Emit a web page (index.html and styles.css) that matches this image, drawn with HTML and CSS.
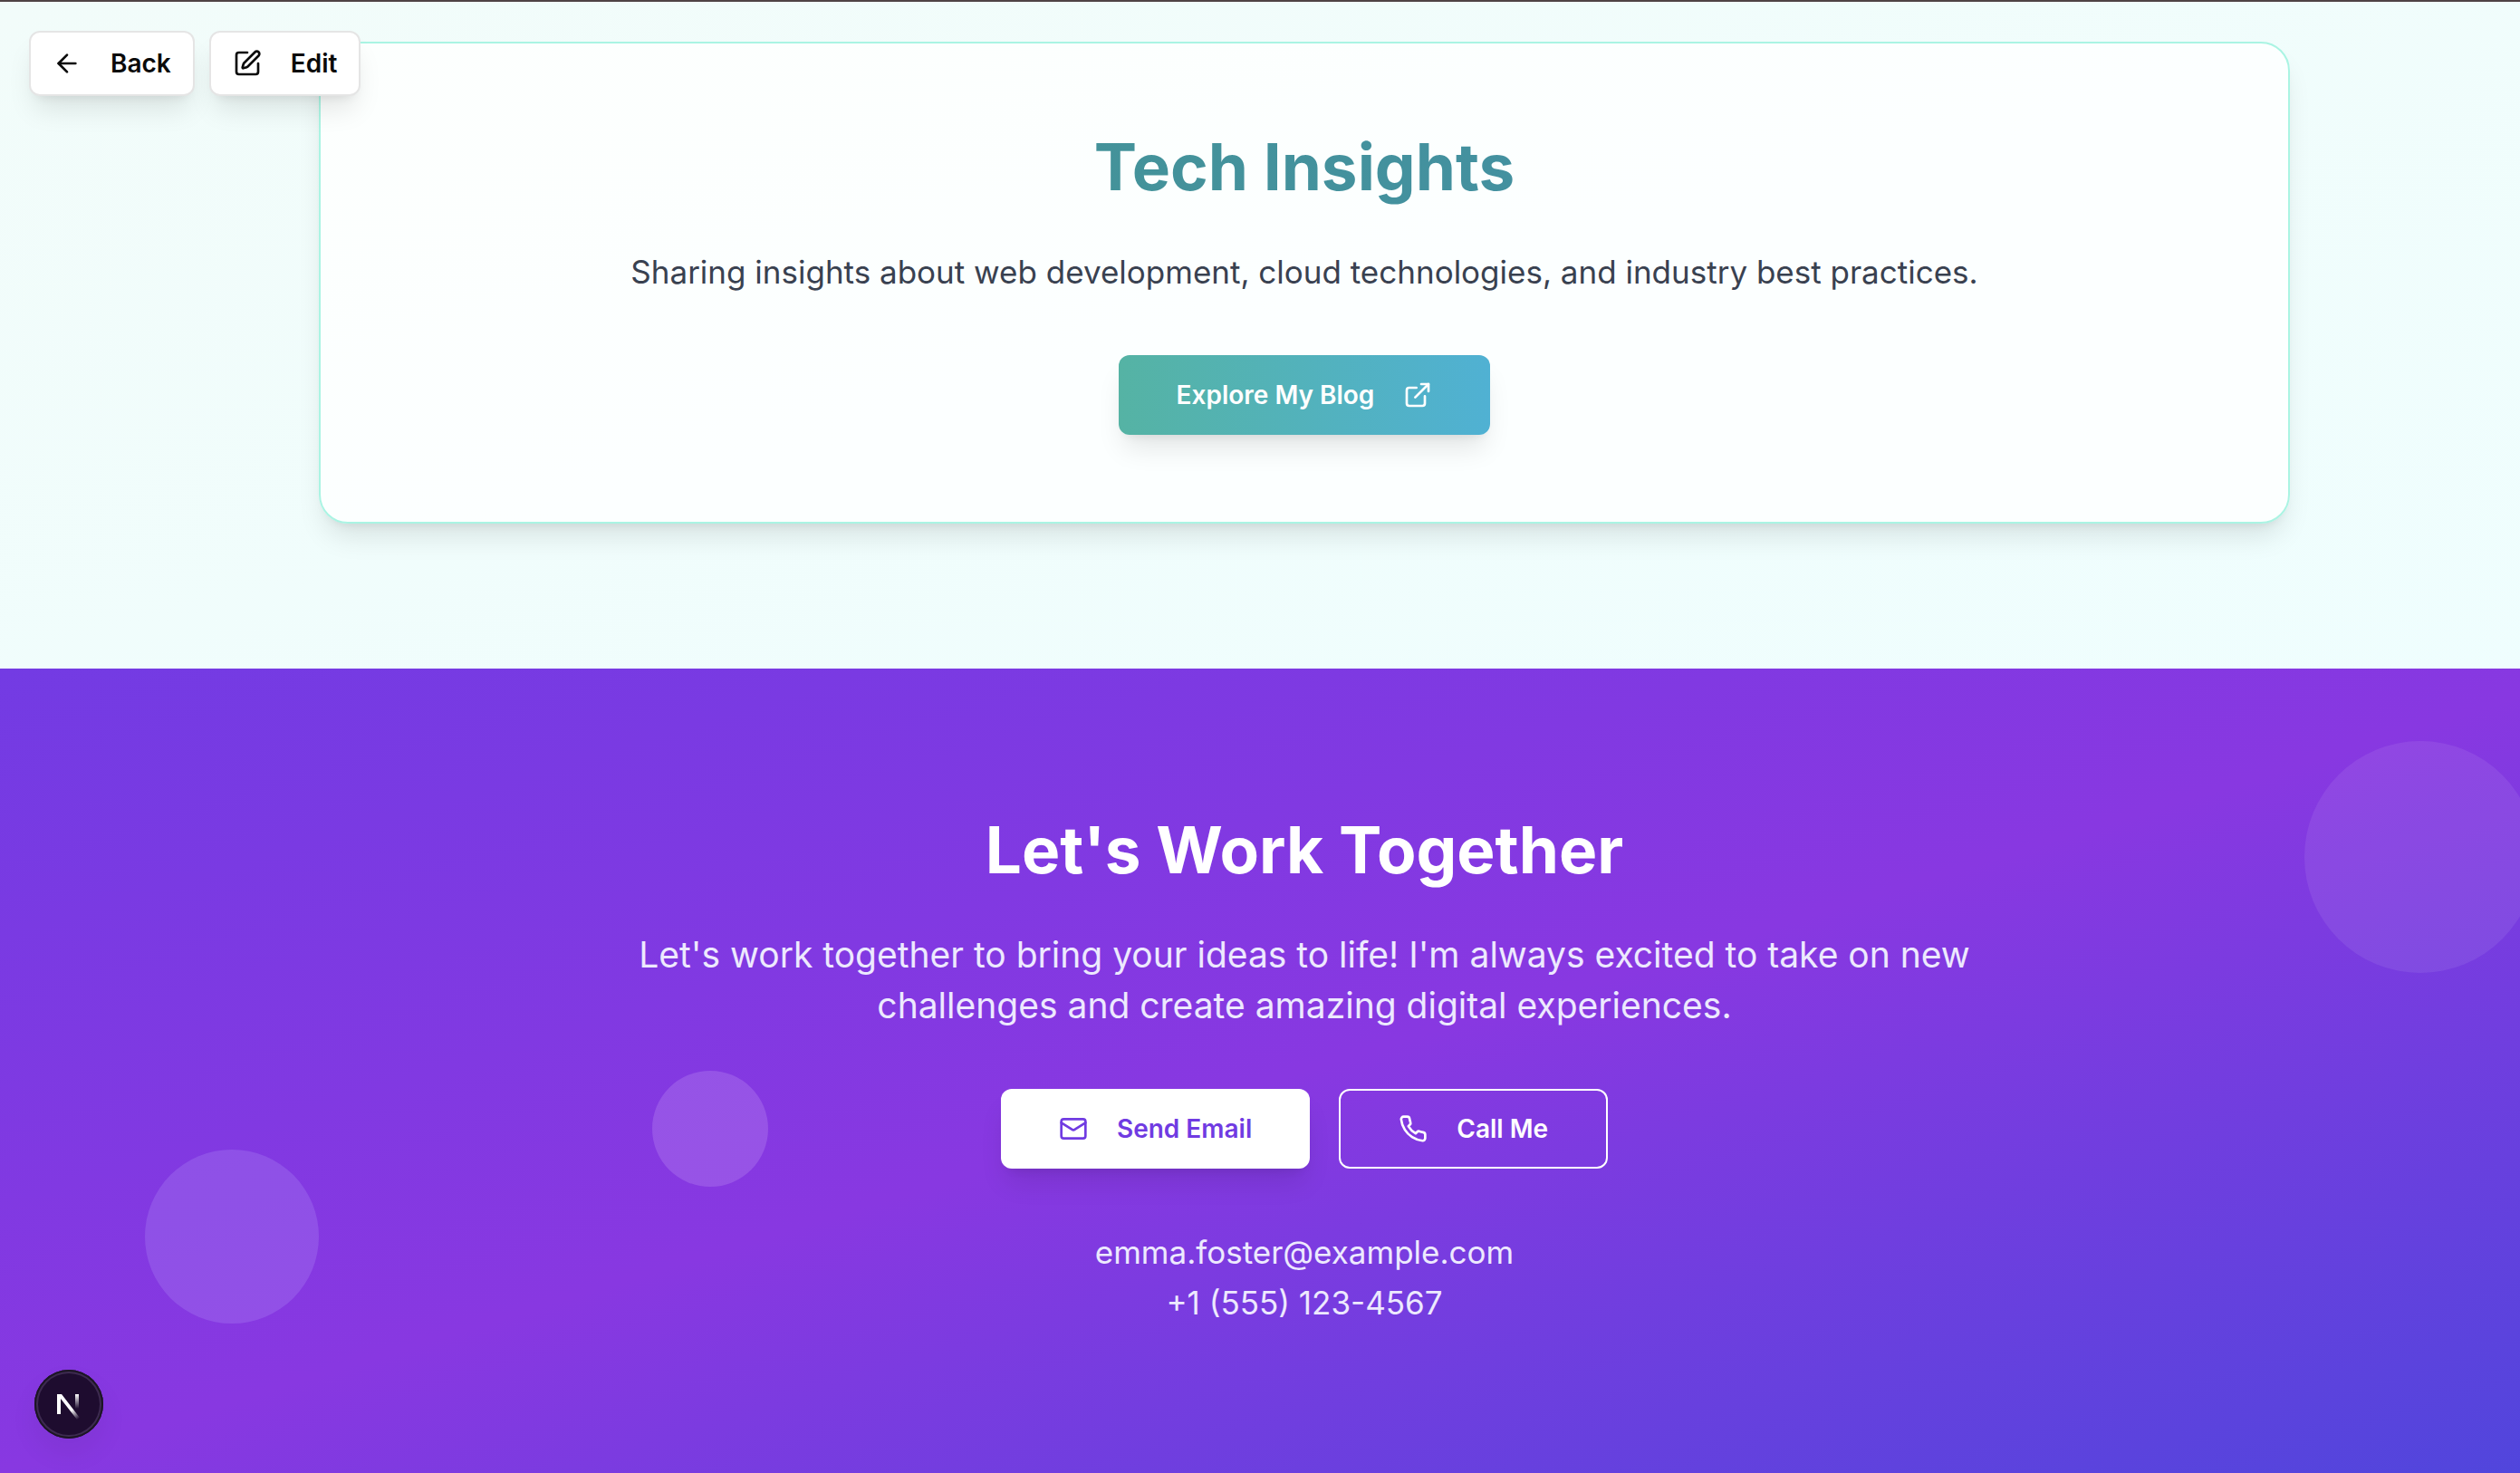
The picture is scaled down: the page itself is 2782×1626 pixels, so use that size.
FILE: index.html
```html
<!DOCTYPE html>
<html lang="en">
<head>
<meta charset="utf-8">
<meta name="viewport" content="width=device-width, initial-scale=1">
<title>Emma Foster – Portfolio</title>
<link rel="stylesheet" href="styles.css">
</head>
<body>
<nav class="toolbar" aria-label="Page actions">
  <button class="tool" type="button">
    <svg class="icon" viewBox="0 0 24 24" aria-hidden="true"><path d="m12 19-7-7 7-7"/><path d="M19 12H5"/></svg>
    <span>Back</span>
  </button>
  <button class="tool" type="button">
    <svg class="icon" viewBox="0 0 24 24" aria-hidden="true"><path d="M12 3H5a2 2 0 0 0-2 2v14a2 2 0 0 0 2 2h14a2 2 0 0 0 2-2v-7"/><path d="M18.375 2.625a1 1 0 0 1 3 3l-9.013 9.014a2 2 0 0 1-.853.505l-2.873.84a.5.5 0 0 1-.62-.62l.84-2.873a2 2 0 0 1 .506-.852z"/></svg>
    <span>Edit</span>
  </button>
</nav>

<main class="page">
  <section class="blog">
    <div class="card">
      <h2 class="heading heading-teal">Tech Insights</h2>
      <p class="summary">Sharing insights about web development, cloud technologies, and industry best practices.</p>
      <a class="btn btn-blog" href="#blog">
        <span>Explore My Blog</span>
        <svg class="icon" viewBox="0 0 24 24" aria-hidden="true"><path d="M15 3h6v6"/><path d="M10 14 21 3"/><path d="M18 13v6a2 2 0 0 1-2 2H5a2 2 0 0 1-2-2V8a2 2 0 0 1 2-2h6"/></svg>
      </a>
    </div>
  </section>

  <section class="contact">
    <span class="bubble bubble-right"></span>
    <span class="bubble bubble-left"></span>
    <span class="bubble bubble-small"></span>
    <div class="contact-body">
      <h2 class="heading">Let's Work Together</h2>
      <p class="pitch">Let's work together to bring your ideas to life! I'm always excited to take on new challenges and create amazing digital experiences.</p>
      <div class="actions">
        <a class="btn btn-email" href="mailto:emma.foster@example.com">
          <svg class="icon" viewBox="0 0 24 24" aria-hidden="true"><rect width="20" height="16" x="2" y="4" rx="2"/><path d="m22 7-8.97 5.7a1.94 1.94 0 0 1-2.06 0L2 7"/></svg>
          <span>Send Email</span>
        </a>
        <a class="btn btn-call" href="tel:+15551234567">
          <svg class="icon" viewBox="0 0 24 24" aria-hidden="true"><path d="M22 16.92v3a2 2 0 0 1-2.18 2 19.79 19.79 0 0 1-8.63-3.07 19.5 19.5 0 0 1-6-6 19.79 19.79 0 0 1-3.07-8.67A2 2 0 0 1 4.11 2h3a2 2 0 0 1 2 1.72 12.84 12.84 0 0 0 .7 2.81 2 2 0 0 1-.45 2.11L8.09 9.91a16 16 0 0 0 6 6l1.27-1.27a2 2 0 0 1 2.11-.45 12.84 12.84 0 0 0 2.81.7A2 2 0 0 1 22 16.92z"/></svg>
          <span>Call Me</span>
        </a>
      </div>
      <address class="details">
        <p>emma.foster@example.com</p>
        <p>+1 (555) 123-4567</p>
      </address>
    </div>
  </section>
</main>

<button class="dev-badge" type="button" aria-label="Open developer tools">
  <svg viewBox="0 0 76 76" aria-hidden="true">
    <defs>
      <linearGradient id="diag" gradientUnits="userSpaceOnUse" x1="38" y1="40" x2="49" y2="54"><stop offset=".3" stop-color="#fff"/><stop offset="1" stop-color="#fff" stop-opacity="0"/></linearGradient>
      <linearGradient id="stem" gradientUnits="userSpaceOnUse" x1="47" y1="27" x2="47" y2="43"><stop offset="0" stop-color="#fff"/><stop offset="1" stop-color="#fff" stop-opacity="0"/></linearGradient>
    </defs>
    <path d="M25 27h5l20 26-3 2-18-23v17h-4z" fill="url(#diag)"/>
    <path d="M45 27h4v16h-4z" fill="url(#stem)"/>
  </svg>
</button>
</body>
</html>
```
FILE: styles.css
```css
*, *::before, *::after { box-sizing: border-box; }

body {
  margin: 0;
  overflow-x: hidden;
  border-top: 2px solid #4f4345;
  background: #f0fdfa;
  color: #0a0a0a;
  font-family: Inter, "Liberation Sans", sans-serif;
  font-size: 28px;
  line-height: 40px;
}

h2, p { margin: 0; }

a { color: inherit; text-decoration: none; }

button { font: inherit; color: inherit; }

.icon {
  flex: none;
  width: 32px;
  height: 32px;
  fill: none;
  stroke: currentColor;
  stroke-width: 2;
  stroke-linecap: round;
  stroke-linejoin: round;
}

/* Floating page actions */
.toolbar {
  position: absolute;
  top: 34px;
  left: 32px;
  z-index: 2;
  display: flex;
  gap: 16px;
}

.tool {
  display: flex;
  align-items: center;
  gap: 32px;
  height: 72px;
  padding: 0 24px;
  border: 2px solid #e5e5e5;
  border-radius: 12px;
  background: #fff;
  font-weight: 600;
  box-shadow: 0 20px 30px -6px rgba(0, 0, 0, .1), 0 8px 12px -8px rgba(0, 0, 0, .1);
}

/* The content column is centred on a canvas slightly wider than the window */
.page { width: calc(100% + 98px); }

.heading {
  padding-bottom: 8px;
  font-size: 71px;
  line-height: 80px;
  font-weight: 700;
  text-align: center;
}

.btn {
  display: inline-flex;
  align-items: center;
  gap: 32px;
  height: 88px;
  padding: 0 64px;
  border-radius: 12px;
  font-weight: 600;
}

/* Blog */
.blog {
  padding: 44px 64px 160px;
  background: linear-gradient(to bottom right, #f2fcfa, #effefe);
}

.card {
  display: flex;
  flex-direction: column;
  align-items: center;
  max-width: 2176px;
  margin: 0 auto;
  padding: 96px;
  border: 2px solid #aaf4e3;
  border-radius: 32px;
  background: rgba(255, 255, 255, .8);
  box-shadow: 0 20px 30px -6px rgba(0, 0, 0, .1), 0 8px 12px -8px rgba(0, 0, 0, .1);
}

.heading-teal {
  align-self: stretch;
  background: linear-gradient(to right, #449590, #438ea9);
  background-clip: text;
  -webkit-background-clip: text;
  color: transparent;
}

.summary {
  margin: 40px 0 64px;
  color: #394150;
  font-size: 35px;
  line-height: 56px;
  text-align: center;
}

.btn-blog {
  color: #fff;
  background: linear-gradient(to right, #55b3a4, #50b1d3);
  box-shadow: 0 20px 30px -6px rgba(0, 0, 0, .1), 0 8px 12px -8px rgba(0, 0, 0, .1);
}

/* Contact */
.contact {
  position: relative;
  padding: 160px 64px;
  background: linear-gradient(to bottom right, #733be3, #8838e1 50%, #4f46dc);
  color: #fff;
}

.contact-body {
  position: relative;
  display: flex;
  flex-direction: column;
  align-items: center;
  max-width: 1536px;
  margin: 0 auto;
}

.pitch {
  margin: 40px 0 64px;
  color: #ede9fe;
  font-size: 39px;
  line-height: 56px;
  text-align: center;
}

.actions {
  display: flex;
  gap: 32px;
}

.btn-email {
  background: #fff;
  color: #703be2;
  box-shadow: 0 20px 30px -6px rgba(0, 0, 0, .1), 0 8px 12px -8px rgba(0, 0, 0, .1);
}

.btn-call { border: 2px solid #fff; }

.details {
  margin-top: 64px;
  color: #ede9fe;
  font-size: 35px;
  font-style: normal;
  line-height: 56px;
  text-align: center;
}

.bubble {
  position: absolute;
  border-radius: 50%;
}

.bubble-right {
  top: 80px;
  right: 80px;
  width: 256px;
  height: 256px;
  background: rgba(255, 255, 255, .08);
}

.bubble-left {
  bottom: 165px;
  left: 160px;
  width: 192px;
  height: 192px;
  background: rgba(196, 181, 253, .2);
}

.bubble-small {
  top: 50%;
  left: 25%;
  width: 128px;
  height: 128px;
  background: rgba(233, 213, 255, .18);
}

/* Developer badge */
.dev-badge {
  position: fixed;
  bottom: 38px;
  left: 38px;
  width: 76px;
  height: 76px;
  padding: 0;
  border: 0;
  border-radius: 50%;
  background: #1e0c2f;
  box-shadow: inset 0 0 0 2px #1c1524, inset 0 0 0 4px #3d2a50, 0 16px 32px rgba(0, 0, 0, .06);
}

.dev-badge svg { display: block; }
```
